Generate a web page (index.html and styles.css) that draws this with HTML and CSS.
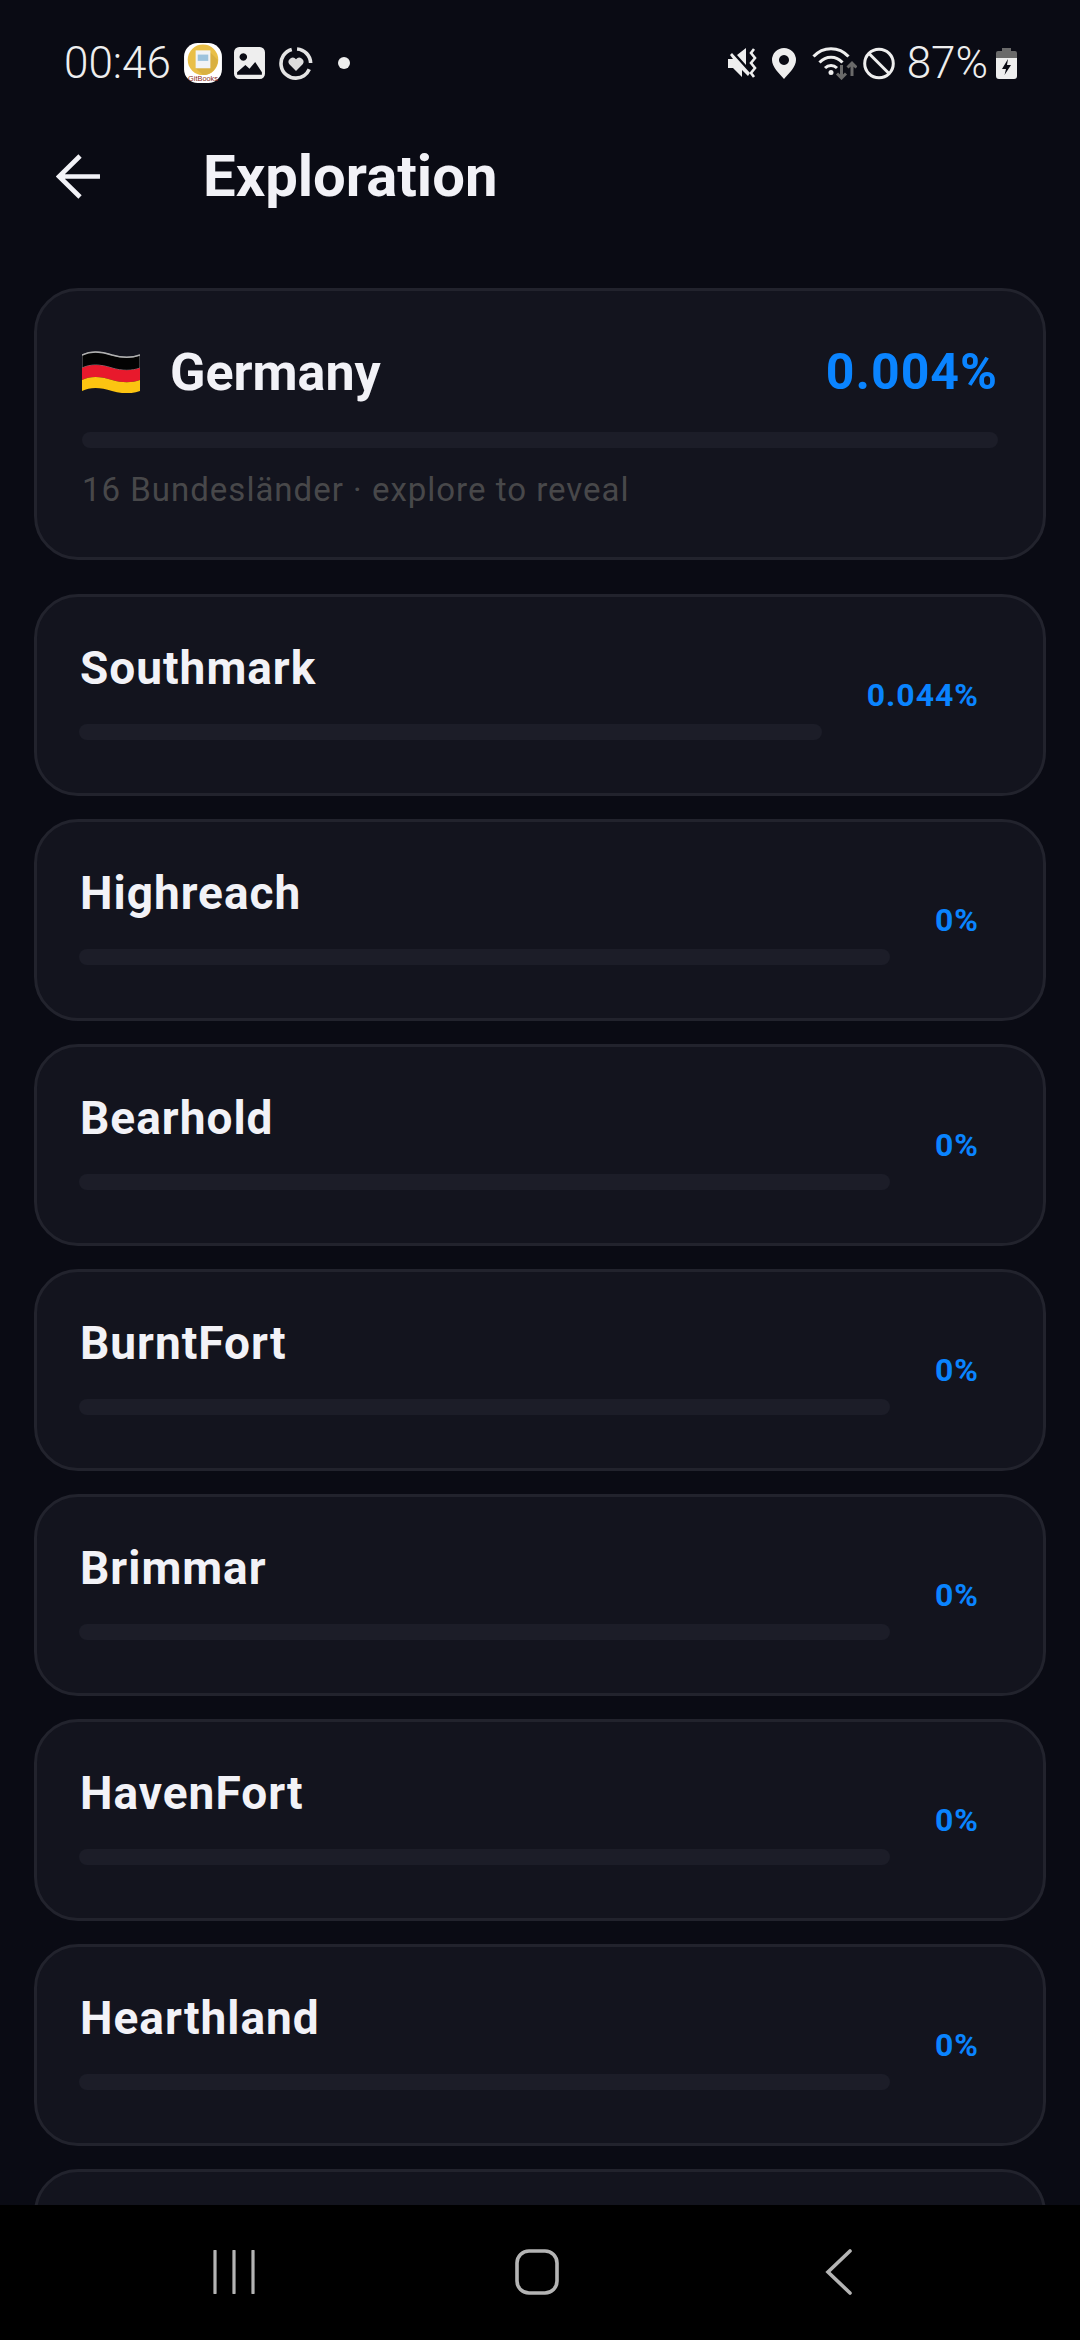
FILE: index.html
```html
<!DOCTYPE html>
<html lang="en">
<head>
  <meta charset="UTF-8" />
  <meta name="viewport" content="width=device-width, initial-scale=1.0" />
  <title>Exploration</title>
  <link rel="stylesheet" href="styles.css">
</head>
<body>

<div id="screen">
  <div id="status-bar">
    <div class="status-left">
      <span class="clock">00:46</span>
      <svg class="ic-app" viewBox="0 0 36 38">
        <rect x="0" y="0" width="36" height="38" rx="13" fill="#fff"/>
        <circle cx="18" cy="16" r="14.5" fill="#e9bf47"/>
        <path d="M25 9 L32 16 A14.5 14.5 0 0 1 18 30.5 L11 24 Z" fill="#d9b040"/>
        <rect x="11" y="7" width="14" height="17" fill="#f1f3f5"/>
        <rect x="13" y="11" width="10" height="6" fill="#9cc3dd"/>
        <text x="18" y="36" class="app-label">GitBooks</text>
      </svg>
      <svg class="ic-gallery" viewBox="0 0 30 31">
        <path fill-rule="evenodd" fill="#eee" d="M5 0H25a5 5 0 0 1 5 5V26a5 5 0 0 1-5 5H5a5 5 0 0 1-5-5V5a5 5 0 0 1 5-5ZM9 6a3.6 3.6 0 1 0 .01 0ZM3 24.5V27H27V24.5L20.5 14.5 15 21 11 17.5Z"/>
      </svg>
      <svg class="ic-ring" viewBox="0 0 32 33" fill="none">
        <path d="M12 3.2A13.8 13.8 0 0 0 16 30.3 13.8 13.8 0 0 0 28.5 22" stroke="#e4e4e4" stroke-width="3.4"/>
        <path d="M17 2.8A13.8 13.8 0 0 1 29.8 16" stroke="#e4e4e4" stroke-width="3.4"/>
        <path d="M16 23.5 9.5 17a4 4 0 0 1 6.5-4.6A4 4 0 0 1 22.5 17Z" fill="#dcdcdc"/>
      </svg>
      <span class="status-dot"></span>
    </div>
    <div class="status-right">
      <svg class="ic-mute" viewBox="0 0 30 30" fill="none">
        <path d="M0 11H5L2 7 4 5 22 25 20 28 14 22V29L5 20H0Z M9 7 18 0V17Z" fill="#eee"/>
        <path d="M26 1 23 5 27 10 23 15 27 20 23 25 26 29" stroke="#eee" stroke-width="2.6"/>
      </svg>
      <svg class="ic-pin" viewBox="0 0 24 31">
        <path fill-rule="evenodd" fill="#eee" d="M12 0A12 12 0 0 1 24 12C24 19 17 25 12 31 7 25 0 19 0 12A12 12 0 0 1 12 0ZM12 7a5 5 0 1 0 .01 0Z"/>
      </svg>
      <svg class="ic-wifi" viewBox="0 0 45 33" fill="none">
        <path d="M1.5 9.5C11 -1 27 -1 36.5 9.5" stroke="#eee" stroke-width="3"/>
        <path d="M7.5 15.5C14 8.5 24 8.5 30.5 15.5" stroke="#eee" stroke-width="3"/>
        <path d="M13 21C16.500 17.500 21.500 17.500 25 21" stroke="#eee" stroke-width="3"/>
        <circle cx="19" cy="25.500" r="2.500" fill="#eee"/>
        <path d="M29.500 18V31M25 26.500 29.500 31 34 26.500" stroke="#6a6a6a" stroke-width="3"/>
        <path d="M40 29V16M35.500 20.500 40 16 44.500 20.500" stroke="#6a6a6a" stroke-width="3"/>
      </svg>
      <svg class="ic-block" viewBox="0 0 32 33" fill="none">
        <circle cx="16" cy="16.500" r="14.300" stroke="#eee" stroke-width="3"/>
        <path d="M6 6.500 26 26.500" stroke="#eee" stroke-width="3"/>
      </svg>
      <span class="battery-pct">87%</span>
      <svg class="ic-battery" viewBox="0 0 21 31">
        <path fill="#6a6a6a" d="M6 0H15V3H19a2 2 0 0 1 2 2V10H0V5a2 2 0 0 1 2-2H6Z"/>
        <path fill="#eee" fill-rule="evenodd" d="M0 10H21V28a3 3 0 0 1-3 3H3a3 3 0 0 1-3-3ZM12 11 6 21H10L8.500 27 15 17H11Z"/>
      </svg>
    </div>
  </div>

  <div id="app-bar">
    <svg class="ic-back" viewBox="0 0 44 44" fill="none">
      <path d="M43 22H3M23.500 2 3 22 23.500 42" stroke="#f2f2f7" stroke-width="4.600"/>
    </svg>
    <h1 class="page-title">Exploration</h1>
  </div>

  <div id="list">
    <div class="card country-card">
      <div class="country-head">
        <svg class="flag" viewBox="0 0 58 42">
          <path d="M0 4C8 0 18 0 30 4 40 7 50 7 58 4V17C50 20 40 20 30 17 18 13 8 13 0 17Z" fill="#030303" stroke="#77777c" stroke-width="1"/>
          <path d="M0 17C8 13 18 13 30 17 40 20 50 20 58 17V29C50 32 40 32 30 29 18 25 8 25 0 29Z" fill="#e8192c"/>
          <path d="M0 29C8 25 18 25 30 29 40 32 50 32 58 29V40C50 43 40 43 30 40 18 36 8 36 0 40Z" fill="#fcc411"/>
          <path d="M0 4C8 0 18 0 30 4 40 7 50 7 58 4" fill="none" stroke="#b0b0b0" stroke-width="1.500"/>
        </svg>
        <span class="country-name">Germany</span>
        <span class="country-pct">0.004%</span>
      </div>
      <div class="bar"></div>
      <div class="country-sub">16 Bundesländer · explore to reveal</div>
    </div>

    <div class="card region">
      <div class="region-main"><div class="region-name">Southmark</div><div class="bar"></div></div>
      <div class="region-pct">0.044%</div>
    </div>
    <div class="card region">
      <div class="region-main"><div class="region-name">Highreach</div><div class="bar"></div></div>
      <div class="region-pct">0%</div>
    </div>
    <div class="card region">
      <div class="region-main"><div class="region-name">Bearhold</div><div class="bar"></div></div>
      <div class="region-pct">0%</div>
    </div>
    <div class="card region">
      <div class="region-main"><div class="region-name">BurntFort</div><div class="bar"></div></div>
      <div class="region-pct">0%</div>
    </div>
    <div class="card region">
      <div class="region-main"><div class="region-name">Brimmar</div><div class="bar"></div></div>
      <div class="region-pct">0%</div>
    </div>
    <div class="card region">
      <div class="region-main"><div class="region-name">HavenFort</div><div class="bar"></div></div>
      <div class="region-pct">0%</div>
    </div>
    <div class="card region">
      <div class="region-main"><div class="region-name">Hearthland</div><div class="bar"></div></div>
      <div class="region-pct">0%</div>
    </div>
    <div class="card region"></div>
  </div>

  <div id="nav-bar">
    <svg class="nav-recents" viewBox="0 0 42 44" fill="none">
      <path d="M2 1V43M21 1V43M40 1V43" stroke="#b4b4b4" stroke-width="3.200" stroke-linecap="round"/>
    </svg>
    <svg class="nav-home" viewBox="0 0 44 46" fill="none">
      <rect x="2" y="2" width="40" height="42" rx="12" stroke="#b4b4b4" stroke-width="3.600"/>
    </svg>
    <svg class="nav-back" viewBox="0 0 28 46" fill="none">
      <path d="M25 2 3 23 25 44" stroke="#b4b4b4" stroke-width="3.600" stroke-linecap="round"/>
    </svg>
  </div>
</div>

</body>
</html>
```

FILE: styles.css
```css
html, body {
  margin: 0;
  background: #0a0b14;
  font-family: Roboto, sans-serif;
}
#screen {
  display: flex;
  flex-direction: column;
  width: 1080px;
  height: 2340px;
  overflow: hidden;
  background: #0a0b14;
}

/* status bar */
#status-bar {
  flex: none;
  display: flex;
  justify-content: space-between;
  align-items: center;
  height: 78px;
  padding: 24px 63px 0 64px;
  color: #eee;
}
.status-left, .status-right {
  display: flex;
  align-items: center;
}
.clock {
  font-size: 44px;
  font-weight: 300;
  line-height: 46px;
  margin-right: 13px;
}
.ic-app { width: 38px; height: 40px; margin-right: 12px; }
.ic-gallery { width: 31px; height: 32px; margin-right: 14px; }
.ic-ring { width: 34px; height: 35px; margin-right: 25px; }
.status-dot {
  width: 12px;
  height: 12px;
  border-radius: 50%;
  background: #eee;
}
.app-label {
  font-family: "Liberation Sans", sans-serif;
  font-size: 7px;
  fill: #8a2a16;
  text-anchor: middle;
}
.ic-mute { width: 30px; height: 30px; margin-right: 14px; }
.ic-pin { width: 24px; height: 31px; margin-right: 16px; }
.ic-wifi { width: 45px; height: 33px; margin-right: 6px; }
.ic-block { width: 32px; height: 33px; margin-right: 12px; }
.battery-pct {
  font-size: 44px;
  font-weight: 300;
  line-height: 46px;
  margin-right: 8px;
}
.ic-battery { width: 21px; height: 31px; }

/* app bar */
#app-bar {
  flex: none;
  display: flex;
  align-items: center;
  height: 148px;
  padding-left: 56px;
}
.ic-back { width: 45px; height: 45px; margin-right: 102px; }
.page-title {
  margin: 0;
  font-size: 58px;
  font-weight: 700;
  color: #f2f2f7;
}

/* cards */
#list {
  flex: 1;
  min-height: 0;
  overflow: hidden;
  padding: 38px 34px 0;
}
.card {
  box-sizing: border-box;
  background: #13141e;
  border: 3px solid #22232d;
  border-radius: 44px;
}
.bar {
  height: 16px;
  border-radius: 8px;
  background: #1c1d28;
}
.country-card {
  height: 272px;
  padding: 53px 45px 0;
  margin-bottom: 34px;
}
.country-head {
  display: flex;
  align-items: center;
  height: 56px;
  margin-bottom: 32px;
}
.flag { width: 58px; height: 42px; margin-right: 30px; }
.country-name {
  flex: 1;
  font-size: 52px;
  font-weight: 700;
  color: #f2f2f7;
}
.country-pct {
  font-size: 50px;
  font-weight: 700;
  letter-spacing: 1px;
  color: #0a84ff;
}
.country-sub {
  margin-top: 22px;
  font-size: 33px;
  letter-spacing: 1px;
  color: #48484a;
}
.region {
  display: flex;
  align-items: center;
  gap: 45px;
  height: 202px;
  padding: 0 64px 0 42px;
  margin-bottom: 23px;
}
.region-main {
  flex: 1;
  min-width: 0;
  padding-bottom: 10px;
}
.region-name {
  padding-left: 1px;
  margin-bottom: 29px;
  font-size: 46px;
  font-weight: 700;
  letter-spacing: 1px;
  color: #f2f2f7;
}
.region-pct {
  font-size: 32px;
  font-weight: 700;
  letter-spacing: 1px;
  color: #0a84ff;
}

/* system nav */
#nav-bar {
  flex: none;
  display: flex;
  align-items: center;
  box-sizing: border-box;
  height: 135px;
  padding: 0 0 1px 213px;
  background: #000;
}
.nav-recents { width: 42px; height: 44px; margin-right: 260px; }
.nav-home { width: 44px; height: 46px; margin-right: 266px; }
.nav-back { width: 28px; height: 46px; }
```
